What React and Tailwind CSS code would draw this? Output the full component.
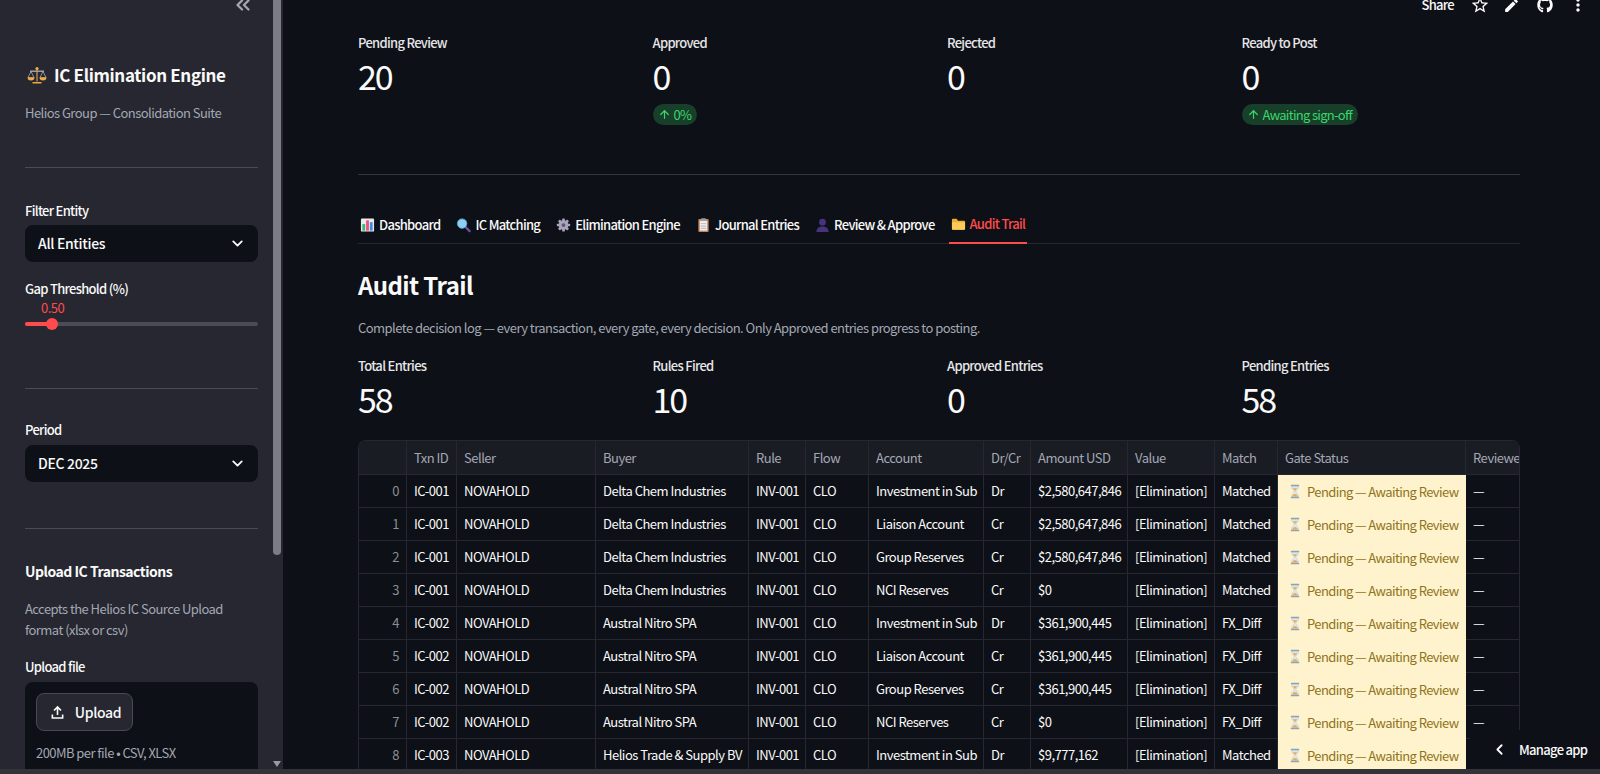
import React from 'react';
import { ChevronDown, ChevronLeft, ChevronsLeft, ArrowUp } from 'lucide-react';
import { FaGithub } from 'react-icons/fa';
import { MdEdit, MdMoreVert, MdStarBorder } from 'react-icons/md';

const font = { fontFamily: '"Noto Sans CJK JP", "Noto Sans", sans-serif' };

// the reference font runs narrower than the installed one, so body text is tightened
const small = 'text-[13px] tracking-[-0.55px]';
const label = 'text-[13px] tracking-[-0.7px] font-medium';

const ScalesIcon = () => (
  <svg viewBox="0 0 20 20" className="w-[20px] h-[21px] ml-[2px] shrink-0">
    <path d="M9 3h2v13H9z" fill="#8d6a3f" />
    <path d="M3 5h14v1.4H3z" fill="#a9a9b0" />
    <circle cx="10" cy="3" r="1.6" fill="#f2b233" />
    <path d="M1 12l3-6 3 6zM13 12l3-6 3 6z" fill="none" stroke="#b9b9bf" strokeWidth="0.7" />
    <path d="M0.5 12h7a3.5 3 0 0 1-7 0zM12.5 12h7a3.5 3 0 0 1-7 0z" fill="#f2a93b" />
    <path d="M5.5 16.5h9V18h-9z" fill="#f2a93b" />
  </svg>
);

const ChartIcon = () => (
  <svg viewBox="0 0 16 16" className="w-[15px] h-[16px] shrink-0">
    <rect x="1" y="1" width="14" height="14" rx="1" fill="#e8eaee" />
    <rect x="2.5" y="7" width="3" height="7" fill="#3fb56b" />
    <rect x="6.5" y="3" width="3" height="11" fill="#ef4f7e" />
    <rect x="10.5" y="5" width="3" height="9" fill="#3a8ee6" />
  </svg>
);

const SearchIcon = () => (
  <svg viewBox="0 0 16 16" className="w-[15px] h-[16px] shrink-0">
    <path d="M9.5 9.5l5 5" stroke="#6c4fa3" strokeWidth="2.4" strokeLinecap="round" />
    <circle cx="6.5" cy="6.5" r="5" fill="#8fd0f2" stroke="#5aa7d8" strokeWidth="1" />
  </svg>
);

const GearIcon = () => (
  <svg viewBox="0 0 16 16" className="w-[15px] h-[16px] shrink-0">
    <g fill="#a9a3bb">
      <circle cx="8" cy="8" r="5.2" />
      <rect x="6.6" y="1" width="2.8" height="14" rx="0.6" />
      <rect x="1" y="6.6" width="14" height="2.8" rx="0.6" />
      <rect x="6.6" y="1" width="2.8" height="14" rx="0.6" transform="rotate(45 8 8)" />
      <rect x="6.6" y="1" width="2.8" height="14" rx="0.6" transform="rotate(-45 8 8)" />
    </g>
    <circle cx="8" cy="8" r="2" fill="#5d5870" />
  </svg>
);

const ClipboardIcon = () => (
  <svg viewBox="0 0 16 16" className="w-[15px] h-[16px] shrink-0">
    <rect x="2.5" y="1.5" width="11" height="14" rx="1" fill="#c9824f" />
    <rect x="4" y="3.5" width="8" height="10.5" fill="#eceef2" />
    <rect x="5.5" y="0.8" width="5" height="2.6" rx="0.5" fill="#9a9fa8" />
    <path d="M5 6h6v1H5zM5 8.5h6v1H5zM5 11h6v1H5z" fill="#b4b8c0" />
  </svg>
);

const BustIcon = () => (
  <svg viewBox="0 0 16 16" className="w-[15px] h-[16px] shrink-0">
    <circle cx="8" cy="5" r="3.6" fill="#46337c" />
    <path d="M1.5 15.5c0-4.2 2.8-6 6.5-6s6.5 1.8 6.5 6z" fill="#46337c" />
  </svg>
);

const FolderIcon = () => (
  <svg viewBox="0 0 16 16" className="w-[15px] h-[16px] shrink-0">
    <path d="M1 3.5A1 1 0 0 1 2 2.5h4l1.5 2H14a1 1 0 0 1 1 1V13a1 1 0 0 1-1 1H2a1 1 0 0 1-1-1z" fill="#f0ad2e" />
    <path d="M1 6h14v7a1 1 0 0 1-1 1H2a1 1 0 0 1-1-1z" fill="#fdcb58" />
  </svg>
);

const HourglassIcon = () => (
  <svg viewBox="0 0 12 16" className="w-[12px] h-[15px] shrink-0">
    <path d="M2.5 2h7v2.4L6.8 8l2.7 3.6V14h-7v-2.4L5.2 8 2.5 4.4z" fill="#d9e8f2" stroke="#b5c6d2" strokeWidth="0.5" />
    <path d="M3.6 4.4h4.8L6 7.4zM3 13.4c.4-1.6 1.8-2.6 3-2.8 1.2.2 2.6 1.2 3 2.8z" fill="#f0a94a" />
    <rect x="1.5" y="0.8" width="9" height="1.5" rx="0.4" fill="#8fa3b4" />
    <rect x="1.5" y="13.7" width="9" height="1.5" rx="0.4" fill="#8fa3b4" />
  </svg>
);

const UploadIcon = () => (
  <svg viewBox="0 0 24 24" className="w-[19px] h-[19px]" fill="#fafafa">
    <path d="M12 3.5l5.2 5.2-1.5 1.4L13 7.5V15h-2V7.5L8.3 10.1 6.8 8.7zM4.5 14.5h2V18h11v-3.5h2V20h-15z" />
  </svg>
);

const SelectBox = ({ value }) => (
  <div className="h-[37px] rounded-lg bg-[#0d1016] flex items-center justify-between pl-[13px] pr-[12px] text-[14px] tracking-[-0.33px] font-medium text-[#fafafa]">
    <span>{value}</span>
    <ChevronDown size={17} strokeWidth={2.6} />
  </div>
);

const Divider = ({ className }) => <div className={`h-px bg-[#4a4b54] ${className}`} />;

const Metric = ({ name, value, delta }) => (
  <div>
    <div className={`${label} leading-[20px] text-[#e6e6e8]`}>{name}</div>
    <div className="text-[34px] tracking-[-2px] leading-[48px] mt-[-1px] text-[#fafafa]">{value}</div>
    {delta && (
      <div className="inline-flex items-center gap-[3px] h-[21px] mt-[4px] pl-[5px] pr-[6px] rounded-full bg-[#173f2a] text-[#3dd56d] text-[13px] tracking-[-0.7px]">
        <ArrowUp size={13} strokeWidth={2.2} />
        {delta}
      </div>
    )}
  </div>
);

const tabs = [
  { name: 'Dashboard', icon: <ChartIcon /> },
  { name: 'IC Matching', icon: <SearchIcon /> },
  { name: 'Elimination Engine', icon: <GearIcon /> },
  { name: 'Journal Entries', icon: <ClipboardIcon /> },
  { name: 'Review & Approve', icon: <BustIcon /> },
  { name: 'Audit Trail', icon: <FolderIcon />, active: true },
];

const columns = [
  ['', 48], ['Txn ID', 50], ['Seller', 139], ['Buyer', 153], ['Rule', 57], ['Flow', 63],
  ['Account', 115], ['Dr/Cr', 47], ['Amount USD', 97], ['Value', 87], ['Match', 63],
  ['Gate Status', 188], ['Reviewer', 54],
];

const rows = [
  ['IC-001', 'NOVAHOLD', 'Delta Chem Industries', 'Investment in Sub', 'Dr', '$2,580,647,846', 'Matched'],
  ['IC-001', 'NOVAHOLD', 'Delta Chem Industries', 'Liaison Account', 'Cr', '$2,580,647,846', 'Matched'],
  ['IC-001', 'NOVAHOLD', 'Delta Chem Industries', 'Group Reserves', 'Cr', '$2,580,647,846', 'Matched'],
  ['IC-001', 'NOVAHOLD', 'Delta Chem Industries', 'NCI Reserves', 'Cr', '$0', 'Matched'],
  ['IC-002', 'NOVAHOLD', 'Austral Nitro SPA', 'Investment in Sub', 'Dr', '$361,900,445', 'FX_Diff'],
  ['IC-002', 'NOVAHOLD', 'Austral Nitro SPA', 'Liaison Account', 'Cr', '$361,900,445', 'FX_Diff'],
  ['IC-002', 'NOVAHOLD', 'Austral Nitro SPA', 'Group Reserves', 'Cr', '$361,900,445', 'FX_Diff'],
  ['IC-002', 'NOVAHOLD', 'Austral Nitro SPA', 'NCI Reserves', 'Cr', '$0', 'FX_Diff'],
  ['IC-003', 'NOVAHOLD', 'Helios Trade & Supply BV', 'Investment in Sub', 'Dr', '$9,777,162', 'Matched'],
];

const cell = 'h-[33px] px-[7px] border-r border-b border-[#262730] whitespace-nowrap overflow-hidden text-[13px] tracking-[-0.5px] text-[#fafafa]';

const AuditTable = () => (
  <div className="rounded-t-lg border-t border-l border-[#262730] overflow-hidden w-[1162px]">
    <table className="table-fixed border-separate border-spacing-0 w-[1161px]">
      <colgroup>
        {columns.map(([name, width]) => (
          <col key={name} width={width} />
        ))}
      </colgroup>
      <thead>
        <tr>
          {columns.map(([name]) => (
            <th key={name} className="h-[34px] px-[7px] bg-[#1a1c24] border-r border-b border-[#262730] text-left font-normal text-[13px] tracking-[-0.5px] text-[#a3a8b4] whitespace-nowrap overflow-hidden">
              {name}
            </th>
          ))}
        </tr>
      </thead>
      <tbody>
        {rows.map((r, i) => (
          <tr key={i}>
            <td className={`${cell} text-right !text-[#8b8e96]`}>{i}</td>
            <td className={cell}>{r[0]}</td>
            <td className={cell}>{r[1]}</td>
            <td className={cell}>{r[2]}</td>
            <td className={cell}>INV-001</td>
            <td className={cell}>CLO</td>
            <td className={cell}>{r[3]}</td>
            <td className={cell}>{r[4]}</td>
            <td className={cell}>{r[5]}</td>
            <td className={cell}>[Elimination]</td>
            <td className={cell}>{r[6]}</td>
            <td className="h-[33px] pl-[11px] pr-[6px] bg-[#fff3cd] text-[#8f7420] text-[13px] tracking-[-0.6px] whitespace-nowrap overflow-hidden">
              <div className="flex items-center gap-[6px]">
                <HourglassIcon />
                Pending — Awaiting Review
              </div>
            </td>
            <td className={cell}>—</td>
          </tr>
        ))}
      </tbody>
    </table>
  </div>
);

const App = () => {
  return (
    <div className="relative w-[1600px] h-[774px] overflow-hidden flex bg-[#0d1016] text-[#fafafa]" style={font}>
      {/* Sidebar */}
      <aside className="relative w-[283px] shrink-0 h-full bg-[#262730] overflow-hidden">
        <div className="absolute right-[2px] top-0 w-[8px] h-[555px] rounded-b-full bg-[#7b7c84]" />
        <div className="absolute right-[2px] top-[761px] w-0 h-0 border-x-[4px] border-x-transparent border-t-[6px] border-t-[#9a9ba2]" />
        <ChevronsLeft size={22} strokeWidth={2.4} className="absolute left-[232px] top-[-6px] text-[#a3a8b4]" />

        <div className="w-[233px] ml-[25px] pt-[60px]">
          <div className="flex items-center gap-[7px] h-[30px] text-[17px] tracking-[-0.35px] font-semibold whitespace-nowrap text-[#fafafa]">
            <ScalesIcon />
            IC Elimination Engine
          </div>
          <p className={`${small} mt-[13px] leading-[20px] text-[#a3a8b4]`}>Helios Group — Consolidation Suite</p>
          <Divider className="mt-[44px]" />

          <div className={`${label} mt-[33px] leading-[20px] text-[#fafafa]`}>Filter Entity</div>
          <div className="mt-[4px]"><SelectBox value="All Entities" /></div>

          <div className={`${label} mt-[17px] leading-[20px] text-[#fafafa]`}>Gap Threshold (%)</div>
          <div className={`${small} ml-[16px] leading-[18px] text-[#ff4b4b]`}>0.50</div>
          <div className="relative mt-[5px] h-[4px] rounded-full bg-[#4b4c56]">
            <div className="h-full w-[27px] rounded-full bg-[#ff4b4b]" />
            <div className="absolute left-[21px] top-[-4px] w-[12px] h-[12px] rounded-full bg-[#ff4b4b]" />
          </div>
          <Divider className="mt-[62px]" />

          <div className={`${label} mt-[31px] leading-[20px] text-[#fafafa]`}>Period</div>
          <div className="mt-[5px]"><SelectBox value="DEC 2025" /></div>
          <Divider className="mt-[46px]" />

          <div className="mt-[31px] text-[14px] tracking-[-0.5px] leading-[22px] font-semibold text-[#fafafa]">Upload IC Transactions</div>
          <p className={`${small} w-[200px] mt-[16px] leading-[21px] text-[#a3a8b4]`}>Accepts the Helios IC Source Upload format (xlsx or csv)</p>
          <div className={`${label} mt-[17px] leading-[20px] text-[#fafafa]`}>Upload file</div>
          <div className="mt-[5px] h-[120px] rounded-lg bg-[#0d1016] px-[11px] pt-[11px]">
            <div className="flex items-center justify-center gap-[8px] w-[97px] h-[38px] rounded-lg border border-[#484a52] bg-[#262730] text-[14px] tracking-[-0.33px] font-medium text-[#fafafa]">
              <UploadIcon />
              Upload
            </div>
            <div className={`${small} mt-[12px] leading-[20px] text-[#a3a8b4]`}>200MB per file • CSV, XLSX</div>
          </div>
        </div>
      </aside>

      {/* Main */}
      <main className="relative flex-1 h-full overflow-hidden pl-[75px] pr-[80px] pt-[33px]">
        <div className="grid grid-cols-4 gap-4 h-[141px]">
          <Metric name="Pending Review" value="20" />
          <Metric name="Approved" value="0" delta="0%" />
          <Metric name="Rejected" value="0" />
          <Metric name="Ready to Post" value="0" delta="Awaiting sign-off" />
        </div>
        <div className="h-px bg-[#33353c]" />

        <div className="mt-[32px] flex gap-[12px] h-[37px] border-b border-[#262730]">
          {tabs.map((t) => (
            <div
              key={t.name}
              className={`${label} relative flex items-center gap-[4px] px-[2px] pb-[2px] h-[37px] whitespace-nowrap ${t.active ? 'text-[#ff4b4b] border-b-2 border-[#ff4b4b]' : 'text-[#fafafa]'}`}
            >
              {t.icon}
              {t.name}
            </div>
          ))}
        </div>

        <h1 className="mt-[21px] text-[24px] tracking-[-0.6px] leading-[40px] font-semibold text-[#fafafa]">Audit Trail</h1>
        <p className={`${small} mt-[13px] leading-[20px] text-[#a3a8b4]`}>Complete decision log — every transaction, every gate, every decision. Only Approved entries progress to posting.</p>

        <div className="grid grid-cols-4 gap-4 mt-[18px] h-[84px]">
          <Metric name="Total Entries" value="58" />
          <Metric name="Rules Fired" value="10" />
          <Metric name="Approved Entries" value="0" />
          <Metric name="Pending Entries" value="58" />
        </div>

        <AuditTable />
      </main>

      {/* Toolbar */}
      <div className="absolute top-[-4px] right-[12px] flex items-center h-[18px] text-[#fafafa]">
        <span className={`${label} mr-[16px]`}>Share</span>
        <MdStarBorder size={20} className="mr-[13px]" />
        <MdEdit size={17} className="mr-[17px]" />
        <FaGithub size={16} className="mr-[15px]" />
        <MdMoreVert size={20} />
      </div>

      {/* Manage app */}
      <div className={`${label} absolute left-[1470px] top-[730px] w-[130px] h-[39px] bg-[#0d1016] flex items-center pl-[21px] whitespace-nowrap text-[#fafafa]`}>
        <ChevronLeft size={17} strokeWidth={2.6} className="mr-[11px]" />
        Manage app
      </div>

      <div className="absolute left-0 right-0 bottom-0 h-[5px] bg-[#33343a]" />
    </div>
  );
};

export default App;
